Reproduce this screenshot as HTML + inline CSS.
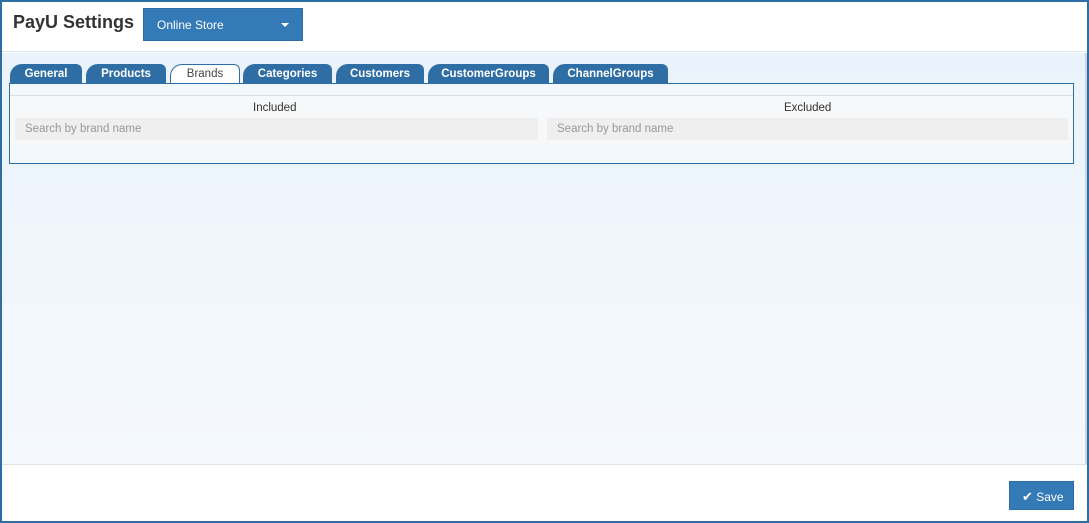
<!DOCTYPE html>
<html><head><style>
*{box-sizing:border-box;margin:0;padding:0}
body{width:1089px;height:523px;font-family:"Liberation Sans",sans-serif;background:#fff;position:relative;overflow:hidden}
.frame{position:absolute;left:0;top:0;width:1089px;height:523px;border:2px solid #2f6ea5;}
.hdr{position:absolute;left:2px;top:2px;width:1085px;height:50px;background:#fff;border-bottom:1px solid #dde6ee}
.title{position:absolute;left:11px;top:10px;font-size:18px;font-weight:bold;color:#333}
.dd{position:absolute;left:141px;top:6px;width:160px;height:33px;background:#337ab7;border:1px solid #2e6da4;color:#fff;font-size:12px;padding:9px 0 0 13px}
.dd:after{content:"";position:absolute;right:13px;top:14px;border:4px solid transparent;border-top:4px solid #fff;}
.main{position:absolute;left:2px;top:53px;width:1083px;height:411px;background:linear-gradient(#eaf3fb,#f5f9fd)}
.sb{position:absolute;left:1085px;top:53px;width:2px;height:411px;background:#cdd6df}
.tab{position:absolute;top:64px;height:20px;background:#2f6ea5;color:#fff;font-size:11.5px;font-weight:bold;text-align:center;padding-top:4px;border-radius:12px 6px 0 0}
.tab.act{background:#fff;color:#444;font-weight:normal;border:1px solid #2f6ea5;border-bottom:none;padding-top:3px}
.panel{position:absolute;left:9px;top:83px;width:1065px;height:81px;border:1px solid #2f6ea5;background:#f3f8fc}
.inner{position:absolute;left:0;top:11px;width:1063px;height:50px;border-top:1px solid #d8dfe6;background:#f7f8f9}
.lbl{position:absolute;top:18px;font-size:11.5px;color:#333}
.srch{position:absolute;top:34px;height:22px;background:#efefef;font-size:11.5px;color:#999;padding:5px 0 0 10px}
.foot{position:absolute;left:2px;top:464px;width:1085px;height:57px;background:#fff;border-top:1px solid #dde3e8}
.save{position:absolute;left:1009px;top:481px;width:65px;height:29px;background:#337ab7;border:1px solid #2e6da4;color:#fff;font-size:12px;padding:7px 0 0 12px}
</style></head><body>
<div class="hdr"><div class="title">PayU Settings</div><div class="dd">Online Store</div></div>
<div class="main"></div><div class="sb"></div>
<div class="tab" style="left:10px;width:72px">General</div>
<div class="tab" style="left:86px;width:80px">Products</div>
<div class="tab act" style="left:170px;width:70px">Brands</div>
<div class="tab" style="left:243px;width:89px">Categories</div>
<div class="tab" style="left:336px;width:88px">Customers</div>
<div class="tab" style="left:428px;width:121px">CustomerGroups</div>
<div class="tab" style="left:553px;width:115px">ChannelGroups</div>
<div class="panel"><div class="inner"></div>
<div class="lbl" style="left:243px">Included</div>
<div class="lbl" style="left:774px">Excluded</div>
<div class="srch" style="left:5px;width:523px">Search by brand name</div>
<div class="srch" style="left:537px;width:521px">Search by brand name</div>
</div>
<div class="foot"></div>
<div class="save"><span style="font-size:13px">✔</span> Save</div>
<div class="frame"></div>
</body></html>
